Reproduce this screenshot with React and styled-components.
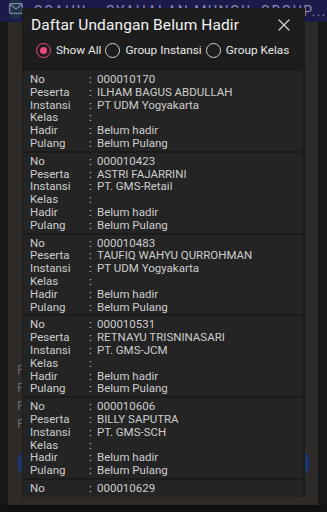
import React from 'react';
import styled, { createGlobalStyle } from 'styled-components';

const GlobalStyle = createGlobalStyle`
  html, body { margin: 0; padding: 0; background: #121212; }
  body { font-family: Roboto, "Liberation Sans", sans-serif; }
  * { box-sizing: border-box; }
`;

const Screen = styled.div`
  position: relative;
  width: 327px;
  height: 512px;
  overflow: hidden;
  background: #111111;
  display: flex;
  flex-direction: column;
`;

const TopBar = styled.div`
  height: 22px;
  flex-shrink: 0;
  background: #1b1a48;
  display: flex;
  align-items: center;
  padding-left: 8px;
  gap: 10px;
  color: #8a8aa8;
  font-size: 14px;
  letter-spacing: 1.5px;
  white-space: nowrap;
`;

const MailBadge = styled.div`
  width: 24px;
  height: 24px;
  border-radius: 50%;
  background: #1f2f4a;
  display: flex;
  align-items: center;
  justify-content: center;
  margin-top: -6px;
`;

const Body = styled.div`
  flex: 1;
  display: flex;
  padding-bottom: 7px;
`;

const Gutter = styled.div`
  width: ${p => p.$w}px;
  background: #171717;
`;

const Panel = styled.div`
  flex: 1;
  background: #2d2a28;
  display: flex;
  flex-direction: column;
  padding: 340px 8px 0 9px;
`;

const GhostLine = styled.div`
  color: #6a6866;
  font-size: 13px;
  height: 18px;
`;

const GhostButton = styled.div`
  margin-top: 14px;
  height: 30px;
  border-radius: 15px;
  background: #1b3566;
`;

const Dialog = styled.div`
  position: absolute;
  left: 22px;
  top: 8px;
  width: 283px;
  height: 489px;
  background: #1d1d1d;
  display: flex;
  flex-direction: column;
  overflow: hidden;
`;

const Header = styled.div`
  flex-shrink: 0;
  display: flex;
  align-items: center;
  justify-content: space-between;
  padding: 4px 15px 0 9px;
  height: 29px;
`;

const Title = styled.div`
  color: #f2f2f2;
  font-size: 15.5px;
  letter-spacing: 0.1px;
`;

const RadioRow = styled.div`
  flex-shrink: 0;
  display: flex;
  align-items: center;
  padding: 0 0 0 14px;
  height: 26px;
`;

const RadioItem = styled.div`
  display: flex;
  align-items: center;
  gap: 5px;
  margin-right: 4px;
  color: #e6e6e6;
  font-size: 11.8px;
`;

const RadioCircle = styled.div`
  width: 15px;
  height: 15px;
  border-radius: 50%;
  border: 1.6px solid ${p => (p.$on ? '#ec4a7e' : '#cfcfcf')};
  display: flex;
  align-items: center;
  justify-content: center;
  &::after {
    content: '';
    width: 7px;
    height: 7px;
    border-radius: 50%;
    background: ${p => (p.$on ? '#ec4a7e' : 'transparent')};
  }
`;

const List = styled.div`
  flex: 1;
  display: flex;
  flex-direction: column;
  gap: 2px;
  padding: 8px 2px 0 1px;
  background: #1b1b1b;
`;

const Card = styled.div`
  background: #242424;
  padding: 2px 0 1px 7px;
  flex-shrink: 0;
`;

const Row = styled.div`
  display: grid;
  grid-template-columns: 59px 8px 1fr;
  height: 12.8px;
  line-height: 12.8px;
  font-size: 11.5px;
  color: #cdcdcd;
  white-space: nowrap;
`;

const fields = ['No', 'Peserta', 'Instansi', 'Kelas', 'Hadir', 'Pulang'];

const people = [
  ['000010170', 'ILHAM BAGUS ABDULLAH', 'PT UDM Yogyakarta'],
  ['000010423', 'ASTRI FAJARRINI', 'PT. GMS-Retail'],
  ['000010483', 'TAUFIQ WAHYU QURROHMAN', 'PT UDM Yogyakarta'],
  ['000010531', 'RETNAYU TRISNINASARI', 'PT. GMS-JCM'],
  ['000010606', 'BILLY SAPUTRA', 'PT. GMS-SCH'],
  ['000010629', 'ANDI PRATAMA', 'PT. GMS-Retail'],
];

const CloseIcon = () => (
  <svg width="12" height="12" viewBox="0 0 12 12">
    <path d="M1 1L11 11M11 1L1 11" stroke="#d0d0d0" strokeWidth="1.3" strokeLinecap="round" />
  </svg>
);

const MailIcon = () => (
  <svg width="14" height="11" viewBox="0 0 14 11">
    <rect x="0.7" y="0.7" width="12.6" height="9.6" rx="1" fill="none" stroke="#7c8aa0" strokeWidth="1.2" />
    <path d="M1 1.2L7 6L13 1.2" fill="none" stroke="#7c8aa0" strokeWidth="1.2" />
  </svg>
);

export default function App() {
  return (
    <>
      <GlobalStyle />
      <Screen>
        <TopBar>
          <MailBadge><MailIcon /></MailBadge>
          <span>OSAHIL - SYAHALAN MUNGIL GROUP...</span>
        </TopBar>
        <Body>
          <Gutter $w={8} />
          <Panel>
            <GhostLine>P</GhostLine>
            <GhostLine>P</GhostLine>
            <GhostLine>P</GhostLine>
            <GhostLine>P</GhostLine>
            <GhostButton />
          </Panel>
          <Gutter $w={9} />
        </Body>

        <Dialog>
          <Header>
            <Title>Daftar Undangan Belum Hadir</Title>
            <CloseIcon />
          </Header>
          <RadioRow>
            <RadioItem><RadioCircle $on />Show All</RadioItem>
            <RadioItem><RadioCircle />Group Instansi</RadioItem>
            <RadioItem><RadioCircle />Group Kelas</RadioItem>
          </RadioRow>
          <List>
            {people.map(([no, name, inst]) => {
              const values = [no, name, inst, '', 'Belum hadir', 'Belum Pulang'];
              return (
                <Card key={no}>
                  {fields.map((f, i) => (
                    <Row key={f}>
                      <span>{f}</span>
                      <span>:</span>
                      <span>{values[i]}</span>
                    </Row>
                  ))}
                </Card>
              );
            })}
          </List>
        </Dialog>
      </Screen>
    </>
  );
}
